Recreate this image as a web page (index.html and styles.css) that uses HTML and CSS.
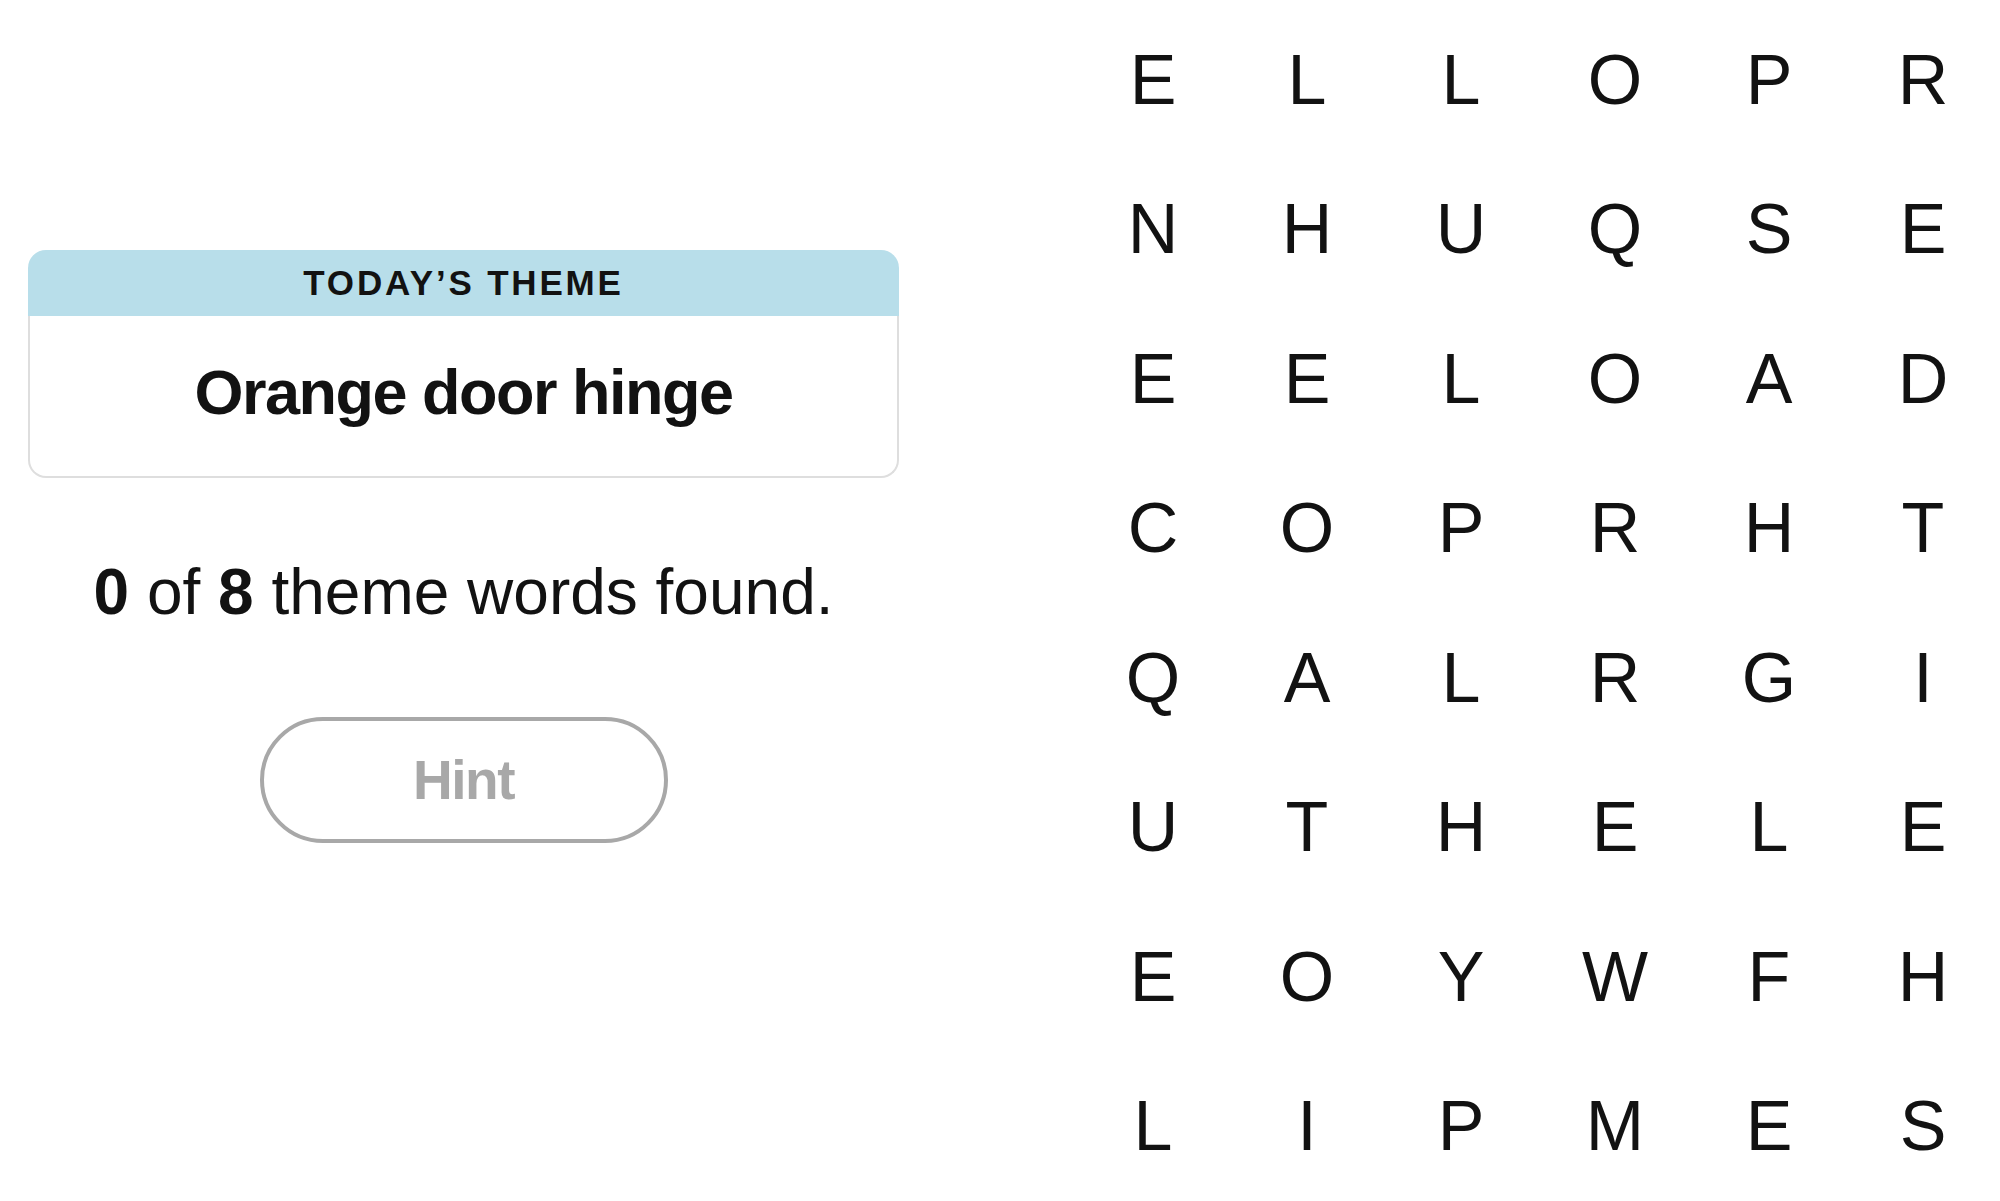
FILE: index.html
```html
<!DOCTYPE html>
<html lang="en">
  <head>
    <meta charset="utf-8">
    <title>Strands</title>
    <meta name="viewport" content="width=device-width, initial-scale=1.0">
    <link rel="stylesheet" href="styles.css">
  </head>
  <body>
    <div class="game">
      <div class="panel">
        <div class="theme">
          <div class="theme-head">Today’s Theme</div>
          <div class="theme-body">Orange door hinge</div>
        </div>
        <p class="count"><b>0</b> of <b>8</b> theme words found.</p>
        <button class="hint" type="button" disabled>Hint</button>
      </div>
      <div class="board">
        <span>E</span><span>L</span><span>L</span><span>O</span><span>P</span><span>R</span>
        <span>N</span><span>H</span><span>U</span><span>Q</span><span>S</span><span>E</span>
        <span>E</span><span>E</span><span>L</span><span>O</span><span>A</span><span>D</span>
        <span>C</span><span>O</span><span>P</span><span>R</span><span>H</span><span>T</span>
        <span>Q</span><span>A</span><span>L</span><span>R</span><span>G</span><span>I</span>
        <span>U</span><span>T</span><span>H</span><span>E</span><span>L</span><span>E</span>
        <span>E</span><span>O</span><span>Y</span><span>W</span><span>F</span><span>H</span>
        <span>L</span><span>I</span><span>P</span><span>M</span><span>E</span><span>S</span>
      </div>
    </div>
  </body>
</html>
```

FILE: styles.css
```css
html {
  margin: 0;
  padding: 0;
}
body {
  margin: 0;
  background-color: #fff;
  color: #121212;
  font-family: "Liberation Sans", Arial, sans-serif;
}
.game {
  display: flex;
  gap: 149px;
  height: 1201px;
  overflow: hidden;
}
.panel {
  width: 927px;
  padding-top: 250px;
  box-sizing: border-box;
  display: flex;
  flex-direction: column;
  align-items: center;
}
.theme {
  width: 871px;
}
.theme-head {
  height: 66px;
  background-color: #b8deea;
  border-radius: 18px 18px 0 0;
  display: flex;
  align-items: center;
  justify-content: center;
  font-size: 35px;
  font-weight: 700;
  letter-spacing: 2.8px;
  text-transform: uppercase;
}
.theme-body {
  height: 162px;
  box-sizing: border-box;
  padding-bottom: 8px;
  border: 2px solid #dedede;
  border-top: 0;
  border-radius: 0 0 18px 18px;
  display: flex;
  align-items: center;
  justify-content: center;
  font-size: 63px;
  font-weight: 700;
  letter-spacing: -1.5px;
  line-height: 1;
}
.count {
  margin: 76px 0 0;
  font-size: 64px;
  line-height: 76px;
}
.hint {
  margin-top: 87px;
  width: 408px;
  height: 126px;
  border: 4px solid #a8a8a8;
  border-radius: 63px;
  background-color: #fff;
  color: #a8a8a8;
  font-family: inherit;
  font-size: 55px;
  font-weight: 700;
  letter-spacing: -1.5px;
}
.board {
  margin-top: 5px;
  display: grid;
  grid-template-columns: repeat(6, 154px);
  grid-template-rows: repeat(8, 149.5px);
}
.board span {
  display: flex;
  align-items: center;
  justify-content: center;
  font-size: 70px;
  line-height: 1;
}
```
